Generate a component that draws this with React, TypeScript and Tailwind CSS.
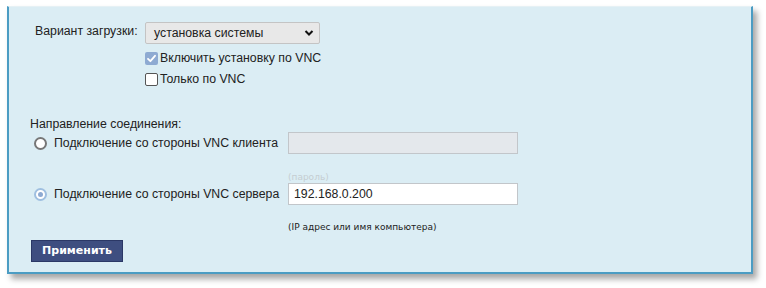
import React from "react";

const sans = { fontFamily: '"Liberation Sans", Arial, sans-serif' };
const dv = { fontFamily: '"DejaVu Sans", Verdana, sans-serif' };

function Checkbox({ checked }: { checked?: boolean }) {
  return checked ? (
    <div className="w-[13px] h-[13px] rounded-[2px] bg-[#8eaad2] flex items-center justify-center">
      <svg width="11" height="11" viewBox="0 0 11 11">
        <path d="M2 5.8 L4.4 8.2 L9 2.8" stroke="#fff" strokeWidth="1.8" fill="none" strokeLinecap="round" strokeLinejoin="round" />
      </svg>
    </div>
  ) : (
    <div className="w-[13px] h-[13px] rounded-[2px] bg-white border border-[#555]" />
  );
}

function Radio({ checked }: { checked?: boolean }) {
  return checked ? (
    <div className="w-[13px] h-[13px] rounded-full border-2 border-[#9fbfe0] bg-white flex items-center justify-center">
      <div className="w-[5px] h-[5px] rounded-full bg-[#8eaad2]" />
    </div>
  ) : (
    <div className="w-[13px] h-[13px] rounded-full border-2 border-[#777] bg-white" />
  );
}

export default function App() {
  return (
    <div className="w-[766px] h-[288px] bg-white pt-[6px] pl-[7px]" style={sans}>
      <div className="w-[746px] h-[268px] bg-[#dbedf4] border-l-2 border-r-2 border-b-2 border-[#4b9cc3] border-t border-t-[#e6f1f5] shadow-[4px_5px_6px_rgba(0,0,0,0.35)] pl-[21px] pt-[15px] text-[12.3px] text-[#222] whitespace-nowrap">
        {/* Row 1 */}
        <div className="flex items-center ml-[5px] h-[22px]">
          <div className="w-[110px] leading-none -mt-[4px]">Вариант загрузки:</div>
          <div className="w-[175px] h-[22px] bg-[#e8e8e8] border border-[#c4c4c4] rounded-[2px] flex items-center justify-between pl-[8px] pr-[5px]">
            <span>установка системы</span>
            <svg width="10" height="8" viewBox="0 0 10 8">
              <path d="M1.5 2 L5 5.5 L8.5 2" stroke="#111" strokeWidth="2" fill="none" />
            </svg>
          </div>
        </div>
        <div className="ml-[115px] mt-[8px] flex items-center gap-[2px] h-[13px]">
          <Checkbox checked />
          <span>Включить установку по VNC</span>
        </div>
        <div className="ml-[115px] mt-[8px] flex items-center gap-[2px] h-[13px]">
          <Checkbox />
          <span>Только по VNC</span>
        </div>

        <div className="mt-[31px] h-[15px] leading-[15px]">Направление соединения:</div>
        <div className="flex items-center h-[22px]">
          <div className="ml-[4px] w-[20px] shrink-0">
            <Radio />
          </div>
          <div className="w-[234px] shrink-0">Подключение со стороны VNC клиента</div>
          <div className="w-[230px] h-[22px] bg-[#e4e8ec] border border-[#c2c6ca]" />
        </div>
        <div className="ml-[258px] mt-[17px] h-[12px] leading-[12px] text-[9px] text-[#c5cdd2]" style={dv}>
          (пароль)
        </div>
        <div className="flex items-center h-[22px]">
          <div className="ml-[4px] w-[20px] shrink-0">
            <Radio checked />
          </div>
          <div className="w-[234px] shrink-0">Подключение со стороны VNC сервера</div>
          <div className="w-[230px] h-[22px] bg-white border border-[#c2c6ca] pl-[5px] flex items-center">
            192.168.0.200
          </div>
        </div>
        <div className="ml-[258px] mt-[16px] h-[12px] leading-[12px] text-[9px] text-[#222]" style={dv}>
          (IP адрес или имя компьютера)
        </div>
        <div className="mt-[7px] ml-[1px] w-[92px] h-[22px] bg-[#3e4e80] border border-[#2b3866] flex items-center justify-center text-white font-bold text-[11px]" style={dv}>
          Применить
        </div>
      </div>
    </div>
  );
}
